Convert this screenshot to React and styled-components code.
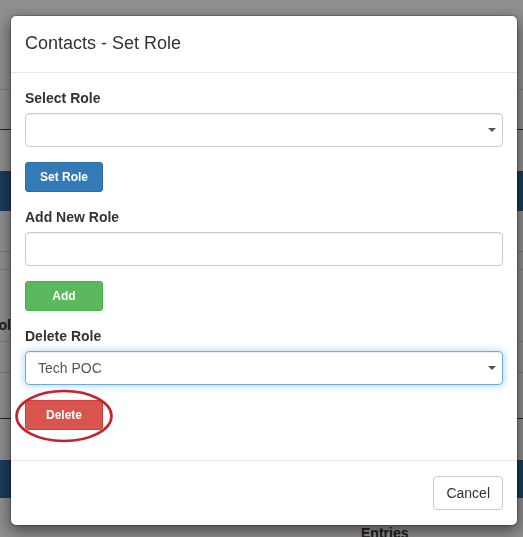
import React from "react";
import styled, { createGlobalStyle } from "styled-components";

const GlobalStyle = createGlobalStyle`
  html, body {
    margin: 0;
    padding: 0;
    background: #fff;
    font-family: "Liberation Sans", Arial, sans-serif;
    overflow: hidden;
  }
  * { box-sizing: border-box; }
`;

const App = () => {
  return (
    <>
      <GlobalStyle />
      <Page>
        <PageRow $h={90} />
        <PageRow $h={40} $dark />
        <PageRow $h={41} $none />
        <Band $h={40} />
        <PageRow $h={41} />
        <PageRow $h={18} />
        <PageRow $h={72}>
          <CutCell>Protocol</CutCell>
        </PageRow>
        <PageRow $h={31} />
        <PageRow $h={46} $dark />
        <PageRow $h={41} $none />
        <Band $h={38} />
        <EntriesRow>
          <span>Entries</span>
        </EntriesRow>
      </Page>
      <Backdrop />
      <Modal>
        <Header>
          <Title>Contacts - Set Role</Title>
        </Header>
        <Body>
          <Group>
            <Label>Select Role</Label>
            <Select />
          </Group>
          <Button $variant="primary">Set Role</Button>
          <Group $top>
            <Label>Add New Role</Label>
            <Input />
          </Group>
          <Button $variant="success">Add</Button>
          <Group $top>
            <Label>Delete Role</Label>
            <Select $focus>Tech POC</Select>
          </Group>
          <Marked>
            <Button $variant="danger">Delete</Button>
            <Circle viewBox="0 0 100 56">
              <ellipse cx="49" cy="28" rx="47.5" ry="25" fill="none" stroke="#c8202a" strokeWidth="2.6" />
            </Circle>
          </Marked>
        </Body>
        <Footer>
          <CancelButton>Cancel</CancelButton>
        </Footer>
      </Modal>
    </>
  );
};

export default App;

const Page = styled.div`
  height: 537px;
  display: flex;
  flex-direction: column;
`;
const PageRow = styled.div`
  flex: 0 0 ${(p) => p.$h}px;
  display: flex;
  align-items: flex-end;
  padding-bottom: 8px;
  border-bottom: 1px solid
    ${(p) => (p.$none ? "transparent" : p.$dark ? "#444" : "#ddd")};
`;
const Band = styled.div`
  flex: 0 0 ${(p) => p.$h}px;
  background: #2e6aa0;
`;
const CutCell = styled.div`
  width: 11px;
  display: flex;
  justify-content: flex-end;
  overflow: hidden;
  white-space: nowrap;
  font-weight: bold;
  font-size: 14px;
  color: #333;
`;
const EntriesRow = styled.div`
  flex: 1;
  display: flex;
  align-items: flex-end;
  padding-left: 361px;
  font-weight: bold;
  font-size: 14px;
  color: #333;
  span {
    margin-bottom: -4px;
  }
`;
const Backdrop = styled.div`
  position: fixed;
  inset: 0;
  background: rgba(0, 0, 0, 0.44);
`;
const Modal = styled.div`
  position: fixed;
  top: 15px;
  left: 10px;
  width: 508px;
  background: #fff;
  border: 1px solid rgba(0, 0, 0, 0.2);
  border-radius: 6px;
  box-shadow: 0 5px 15px rgba(0, 0, 0, 0.5);
  background-clip: padding-box;
`;
const Header = styled.div`
  padding: 15px 14px;
  border-bottom: 1px solid #e5e5e5;
`;
const Title = styled.h4`
  margin: 0;
  font-size: 18px;
  font-weight: normal;
  line-height: 1.42857;
  color: #333;
`;
const Body = styled.div`
  padding: 15px 14px;
  display: flex;
  flex-direction: column;
  align-items: flex-start;
`;
const Group = styled.div`
  width: 100%;
  margin-top: ${(p) => (p.$top ? "15px" : "0")};
  margin-bottom: 15px;
`;
const Label = styled.label`
  display: block;
  margin-bottom: 5px;
  font-size: 14px;
  font-weight: bold;
  line-height: 20px;
  color: #333;
`;
const Input = styled.div`
  height: 34px;
  width: 100%;
  padding: 6px 12px;
  font-size: 14px;
  line-height: 20px;
  color: #555;
  background: #fff;
  border: 1px solid #ccc;
  border-radius: 4px;
  box-shadow: inset 0 1px 1px rgba(0, 0, 0, 0.075);
`;
const Select = styled(Input)`
  position: relative;
  border-color: ${(p) => (p.$focus ? "#66afe9" : "#ccc")};
  box-shadow: ${(p) =>
    p.$focus
      ? "inset 0 1px 1px rgba(0,0,0,.075), 0 0 8px rgba(102,175,233,.6)"
      : "inset 0 1px 1px rgba(0,0,0,.075)"};
  &::after {
    content: "";
    position: absolute;
    right: 6px;
    top: 14px;
    border-left: 4px solid transparent;
    border-right: 4px solid transparent;
    border-top: 4px solid #555;
  }
`;
const colors = {
  primary: ["#337ab7", "#2e6da4"],
  success: ["#5cb85c", "#4cae4c"],
  danger: ["#d9534f", "#d43f3a"],
};
const Button = styled.button`
  width: 78px;
  height: 30px;
  padding: 5px 10px;
  font-family: "Liberation Sans", Arial, sans-serif;
  font-size: 12px;
  font-weight: bold;
  line-height: 1.5;
  color: #fff;
  background: ${(p) => colors[p.$variant][0]};
  border: 1px solid ${(p) => colors[p.$variant][1]};
  border-radius: 3px;
`;
const Marked = styled.div`
  position: relative;
  margin-bottom: 15px;
`;
const Circle = styled.svg`
  position: absolute;
  left: -10px;
  top: -12px;
  width: 100px;
  height: 56px;
  overflow: visible;
`;
const Footer = styled.div`
  padding: 15px 14px;
  border-top: 1px solid #e5e5e5;
  display: flex;
  justify-content: flex-end;
`;
const CancelButton = styled.button`
  height: 34px;
  padding: 6px 12px;
  font-family: "Liberation Sans", Arial, sans-serif;
  font-size: 14px;
  line-height: 20px;
  color: #333;
  background: #fff;
  border: 1px solid #ccc;
  border-radius: 4px;
`;
